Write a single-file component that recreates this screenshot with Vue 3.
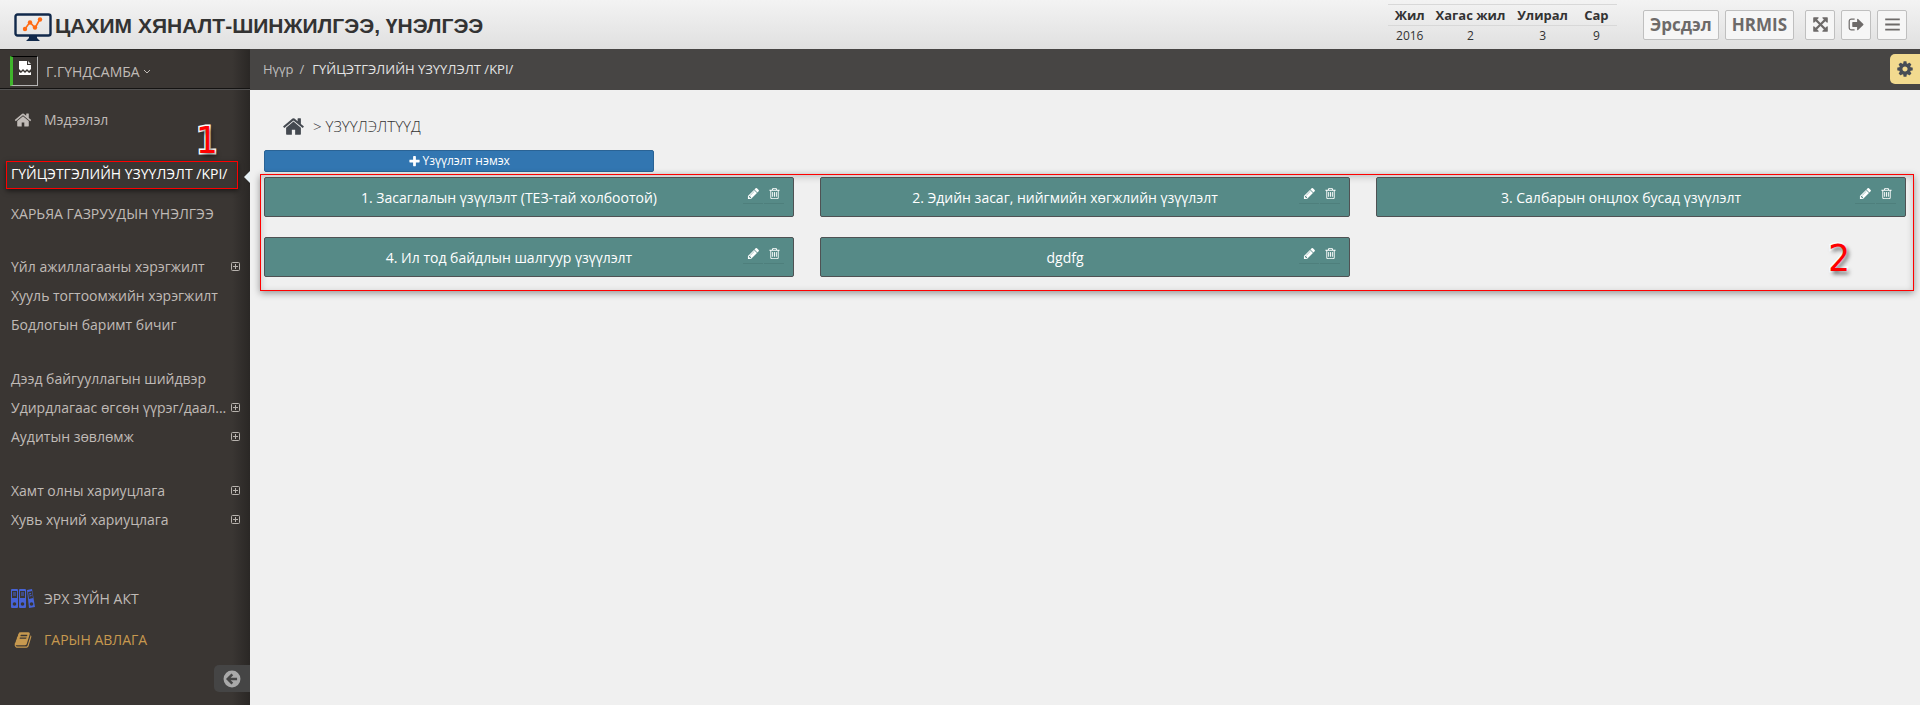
<script setup>
const icons = {
  home: 'M1472 992v480q0 26-19 45t-45 19h-384v-384h-256v384h-384q-26 0-45-19t-19-45v-480q0-1 .5-3t.5-3l575-474 575 474q1 2 1 6zm223-69l-62 74q-8 9-21 11h-3q-13 0-21-7l-692-577-692 577q-12 8-24 7-13-2-21-11l-62-74q-8-10-7-23.5t11-21.5l719-599q32-26 76-26t76 26l244 204v-195q0-14 9-23t23-9h192q14 0 23 9t9 23v408l219 182q10 8 11 21.5t-7 23.5z',
  plus: 'M1600 736v192q0 40-28 68t-68 28h-416v416q0 40-28 68t-68 28h-192q-40 0-68-28t-28-68v-416h-416q-40 0-68-28t-28-68v-192q0-40 28-68t68-28h416v-416q0-40 28-68t68-28h192q40 0 68 28t28 68v416h416q40 0 68 28t28 68z',
  pencil: 'M491 1536l91-91-235-235-91 91v107h128v128h107zm523-928q0-22-22-22-10 0-17 7l-542 542q-7 7-7 17 0 22 22 22 10 0 17-7l542-542q7-7 7-17zm-54-192l416 416-832 832h-416v-416zm683 96q0 53-37 90l-166 166-416-416 166-165q36-38 90-38 53 0 91 38l235 234q37 39 37 91z',
  trash: 'M704 736v576q0 14-9 23t-23 9h-64q-14 0-23-9t-9-23v-576q0-14 9-23t23-9h64q14 0 23 9t9 23zm256 0v576q0 14-9 23t-23 9h-64q-14 0-23-9t-9-23v-576q0-14 9-23t23-9h64q14 0 23 9t9 23zm256 0v576q0 14-9 23t-23 9h-64q-14 0-23-9t-9-23v-576q0-14 9-23t23-9h64q14 0 23 9t9 23zm128 724v-948h-896v948q0 22 7 40.5t14.5 27 10.5 8.5h832q3 0 10.5-8.5t14.5-27 7-40.5zm-672-1076h448l-48-117q-7-9-17-11h-317q-10 2-17 11zm928 32v64q0 14-9 23t-23 9h-96v948q0 83-47 143.5t-113 60.5h-832q-66 0-113-58.5t-47-141.5v-952h-96q-14 0-23-9t-9-23v-64q0-14 9-23t23-9h309l70-167q15-37 54-63t79-26h320q40 0 79 26t54 63l70 167h309q14 0 23 9t9 23z',
  gear: 'M1152 896q0-106-75-181t-181-75-181 75-75 181 75 181 181 75 181-75 75-181zm512-109v222q0 12-8 23t-20 13l-185 28q-19 54-39 91 35 50 107 138 10 12 10 25t-9 23q-27 37-99 108t-94 71q-12 0-26-9l-138-108q-44 23-91 38-16 136-29 186-7 28-36 28h-222q-14 0-24.5-8.5t-11.5-21.5l-28-184q-49-16-90-37l-141 107q-10 9-25 9-14 0-25-11-126-114-165-168-7-10-7-23 0-12 8-23 15-21 51-66.5t54-70.5q-27-50-41-99l-183-27q-13-2-21-12.5t-8-23.5v-222q0-12 8-23t19-13l186-28q14-46 39-92-40-57-107-138-10-12-10-24 0-10 9-23 26-36 98.5-107.5t94.5-71.5q13 0 26 10l138 107q44-23 91-38 16-136 29-186 7-28 36-28h222q14 0 24.5 8.5t11.5 21.5l28 184q49 16 90 37l142-107q9-9 24-9 13 0 25 10 129 119 165 170 7 8 7 22 0 12-8 23-15 21-51 66.5t-54 70.5q26 50 41 98l183 28q13 2 21 12.5t8 23.5z',
  expand: 'M1411 541l-355 355 355 355 144-144q29-31 70-14 39 17 39 59v448q0 26-19 45t-45 19h-448q-42 0-59-40-17-39 14-69l144-144-355-355-355 355 144 144q31 30 14 69-17 40-59 40h-448q-26 0-45-19t-19-45v-448q0-42 40-59 39-17 69 14l144 144 355-355-355-355-144 144q-19 19-45 19-12 0-24-5-40-17-40-59v-448q0-26 19-45t45-19h448q42 0 59 40 17 39-14 69l-144 144 355 355 355-355-144-144q-31-30-14-69 17-40 59-40h448q26 0 45 19t19 45v448q0 42-39 59-13 5-25 5-26 0-45-19z',
  signout: 'M704 1440q0 4 1 20t.5 26.5-3 23.5-10 19.5-20.5 6.5h-320q-119 0-203.5-84.5t-84.5-203.5v-704q0-119 84.5-203.5t203.5-84.5h320q13 0 22.5 9.5t9.5 22.5q0 4 1 20t.5 26.5-3 23.5-10 19.5-20.5 6.5h-320q-66 0-113 47t-47 113v704q0 66 47 113t113 47h312l11.5 1 11.5 3 8 5.5 7 9 2 13.5zm928-544q0 26-19 45l-544 544q-19 19-45 19t-45-19-19-45v-288h-448q-26 0-45-19t-19-45v-384q0-26 19-45t45-19h448v-288q0-26 19-45t45-19 45 19l544 544q19 19 19 45z',
  bars: 'M128 1344h1536v192h-1536zM128 800h1536v192h-1536zM128 256h1536v192h-1536z',
  book: 'M1703 478q40 57 18 129l-275 906q-19 64-76.5 107.5t-122.5 43.5h-923q-77 0-148.5-53.5t-99.5-131.5q-24-67-2-127 0-4 3-27t4-37q1-8-3-21.5t-3-19.5q2-11 8-21t16.5-23.5 16.5-23.5q23-38 45-91.5t30-91.5q3-10 .5-30t-.5-28q3-11 17-28t17-23q21-36 42-92t25-90q1-9-2.5-32t.5-28q4-13 22-30.5t22-22.5q19-26 42.5-84.5t27.5-96.5q1-8-3-25.5t-2-26.5q2-8 9-18t18-23 17-21q8-12 16.5-30.5t15-35 16-36 19.5-32 26.5-23.5 36-11.5 47.5 5.5l-1 3q38-9 51-9h761q74 0 114 56t18 130l-274 906q-36 119-71.5 153.5t-128.5 34.5h-869q-27 0-38 15-11 16-1 43 24 70 144 70h923q29 0 56-15.5t35-41.5l300-987q7-22 5-57 38 15 59 43zm-1064 2q-4 13 2 22.5t20 9.5h608q13 0 25.5-9.5t16.5-22.5l21-64q4-13-2-22.5t-20-9.5h-608q-13 0-25.5 9.5t-16.5 22.5zm-83 256q-4 13 2 22.5t20 9.5h608q13 0 25.5-9.5t16.5-22.5l21-64q4-13-2-22.5t-20-9.5h-608q-13 0-25.5 9.5t-16.5 22.5z',
}

const groups = [
  [
    { text: 'Үйл ажиллагааны хэрэгжилт', more: true },
    { text: 'Хууль тогтоомжийн хэрэгжилт' },
    { text: 'Бодлогын баримт бичиг' },
  ],
  [
    { text: 'Дээд байгууллагын шийдвэр' },
    { text: 'Удирдлагаас өгсөн үүрэг/даал...', more: true },
    { text: 'Аудитын зөвлөмж', more: true },
  ],
  [
    { text: 'Хамт олны хариуцлага', more: true },
    { text: 'Хувь хүний хариуцлага', more: true },
  ],
]

const cards = [
  '1. Засаглалын үзүүлэлт (ТЕЗ-тай холбоотой)',
  '2. Эдийн засаг, нийгмийн хөгжлийн үзүүлэлт',
  '3. Салбарын онцлох бусад үзүүлэлт',
  '4. Ил тод байдлын шалгуур үзүүлэлт',
  'dgdfg',
]

const tools = [
  { icon: 'expand', label: 'Бүтэн дэлгэц' },
  { icon: 'signout', label: 'Гарах' },
  { icon: 'bars', label: 'Цэс' },
]
</script>

<template>
  <div class="page">
    <header class="header">
      <div class="brand">
        <svg class="logo" viewBox="0 0 38 28" aria-hidden="true">
          <rect x="1.5" y="1.5" width="35" height="21" rx="2" fill="none" stroke="#11294b" stroke-width="2.4" />
          <path d="M15 23h8v2l3 3H12l3-3z" fill="#11294b" />
          <path d="M11 16l5-7 5 6 5-9" fill="none" stroke="#ff6a13" stroke-width="1.6" />
          <g fill="#ff6a13">
            <circle cx="11" cy="16" r="2.2" /><circle cx="16" cy="9.5" r="2.2" />
            <circle cx="21" cy="14.5" r="2.2" /><circle cx="26" cy="6.5" r="2.2" />
          </g>
        </svg>
        <span class="title">ЦАХИМ ХЯНАЛТ-ШИНЖИЛГЭЭ, ҮНЭЛГЭЭ</span>
      </div>
      <table class="period">
        <colgroup><col class="c1"><col class="c2"><col class="c3"><col class="c4"></colgroup>
        <thead>
          <tr><th>Жил</th><th>Хагас жил</th><th>Улирал</th><th>Сар</th></tr>
        </thead>
        <tbody>
          <tr><td>2016</td><td>2</td><td>3</td><td>9</td></tr>
        </tbody>
      </table>
      <div class="links">
        <button type="button" class="btn">Эрсдэл</button>
        <button type="button" class="btn">HRMIS</button>
      </div>
      <div class="tools">
        <button v-for="t in tools" :key="t.icon" type="button" class="btn square" :aria-label="t.label">
          <svg class="i16" viewBox="0 0 1792 1792"><path :d="icons[t.icon]" /></svg>
        </button>
      </div>
    </header>

    <div class="body">
      <aside class="sidebar">
        <a href="#" class="user">
          <span class="avatar">
            <svg viewBox="0 0 12 14" width="12" height="14" aria-hidden="true">
              <path d="M0 0h8v4h4v4l-2 2-2-2-2 2-2-2-2 2-2-2z" fill="#fff" />
              <path d="M9 0l3 3H9z" fill="#ddd" />
              <path d="M0 11l2 1 2-2 2 2 2-2 2 2 2-1v3H0z" fill="#fff" />
            </svg>
          </span>
          <span>Г.ГҮНДСАМБА</span>
          <svg class="chevron" viewBox="0 0 8 6" aria-hidden="true"><path d="M1 1l3 3 3-3" /></svg>
        </a>

        <nav class="nav">
          <a href="#" class="row tall home">
            <span class="lead"><svg class="i18" viewBox="0 0 1792 1792"><path :d="icons.home" /></svg></span>
            Мэдээлэл
          </a>
          <ul class="list caps">
            <li class="current">
              <a href="#" class="row active"><span class="outline">ГҮЙЦЭТГЭЛИЙН ҮЗҮҮЛЭЛТ /KPI/</span></a>
              <span class="mark one">1</span>
            </li>
            <li><a href="#" class="row">ХАРЬЯА ГАЗРУУДЫН ҮНЭЛГЭЭ</a></li>
          </ul>
          <ul v-for="(g, n) in groups" :key="n" class="list">
            <li v-for="item in g" :key="item.text">
              <a href="#" class="row">
                {{ item.text }}
                <svg v-if="item.more" class="more" viewBox="0 0 9 9" aria-hidden="true">
                  <rect x=".5" y=".5" width="8" height="8" rx="1" /><path d="M2 4.5h5M4.5 2v5" />
                </svg>
              </a>
            </li>
          </ul>
          <div class="extra">
            <a href="#" class="row tall">
              <span class="lead">
                <svg viewBox="0 0 24 19" width="24" height="19" aria-hidden="true">
                  <g fill="#4763d6">
                    <rect width="7" height="19" rx="1" /><rect x="8" width="7" height="19" rx="1" />
                    <path d="M16 1l5-1 3 18-6 1z" />
                  </g>
                  <g fill="#3a3633">
                    <rect x="1" y="2" width="5" height="7" /><rect x="9" y="2" width="5" height="7" />
                    <path d="M17 3l4-1 1 7-4 1z" />
                    <circle cx="3.5" cy="15" r="1.8" /><circle cx="11.5" cy="15" r="1.8" /><circle cx="20.5" cy="15" r="1.8" />
                  </g>
                  <path d="M2 4h3M2 6h3M10 4h3M10 6h3M18 5l2-.5M18.5 7l2-.5" stroke="#4763d6" />
                </svg>
              </span>
              ЭРХ ЗҮЙН АКТ
            </a>
            <a href="#" class="row tall manual">
              <span class="lead"><svg class="i18" viewBox="0 0 1792 1792"><path :d="icons.book" /></svg></span>
              ГАРЫН АВЛАГА
            </a>
          </div>
        </nav>

        <button type="button" class="minify" aria-label="Цэс хураах">
          <svg viewBox="0 0 16 16" width="18" height="18">
            <circle cx="8" cy="8" r="7.5" fill="#a9a9a9" />
            <path d="M12.5 8H4.500M8.300 3.800L4.200 8l4.100 4.200" fill="none" stroke="#454545" stroke-width="2.2" />
          </svg>
        </button>
      </aside>

      <main class="main">
        <div class="ribbon">
          <a href="#">Нүүр</a><span class="sep">/</span><span class="here">ГҮЙЦЭТГЭЛИЙН ҮЗҮҮЛЭЛТ /KPI/</span>
          <button type="button" class="settings" aria-label="Тохиргоо">
            <svg class="i18" viewBox="0 0 1792 1792"><path :d="icons.gear" /></svg>
          </button>
        </div>

        <div class="content">
          <h1 class="heading">
            <svg class="i24" viewBox="0 0 1792 1792" aria-hidden="true"><path :d="icons.home" /></svg>
            <span>&gt; ҮЗҮҮЛЭЛТҮҮД</span>
          </h1>
          <button type="button" class="add">
            <svg class="i12" viewBox="0 0 1792 1792" aria-hidden="true"><path :d="icons.plus" /></svg>
            Үзүүлэлт нэмэх
          </button>

          <section class="board">
            <article v-for="c in cards" :key="c" class="card">
              <span class="name">{{ c }}</span>
              <span class="actions">
                <button type="button" aria-label="Засах"><svg class="i12" viewBox="0 0 1792 1792"><path :d="icons.pencil" /></svg></button>
                <button type="button" aria-label="Устгах"><svg class="i12" viewBox="0 0 1792 1792"><path :d="icons.trash" /></svg></button>
              </span>
            </article>
            <span class="mark two">2</span>
          </section>
        </div>
      </main>
    </div>
  </div>
</template>

<style>
body { margin: 0; background: #f0f0f0; }
</style>

<style scoped>
* { box-sizing: border-box; }
.page {
  min-height: 100vh;
  display: flex;
  flex-direction: column;
  font: 13px/20px "Open Sans", "Noto Sans", sans-serif;
  color: #333;
}
a { color: inherit; text-decoration: none; }
button { font: inherit; color: inherit; cursor: pointer; padding: 0; margin: 0; }
svg { display: block; flex: none; }
svg.i12, svg.i16, svg.i18, svg.i24 { fill: currentColor; }
.i12 { width: 13px; height: 13px; }
.i16 { width: 17px; height: 17px; }
.i18 { width: 18px; height: 18px; }
.i24 { width: 23px; height: 23px; }

.header {
  height: 49px;
  display: flex;
  align-items: center;
  padding: 0 13px 0 14px;
  background: linear-gradient(#f3f3f3, #e0e0e0);
}
.brand { flex: 1; display: flex; align-items: center; gap: 3px; padding-top: 4px; }
.logo { width: 38px; height: 28px; }
.title { font: bold 21px/24px "Liberation Sans", Arial, sans-serif; white-space: nowrap; padding-bottom: 2px; }
.period {
  width: 229px;
  table-layout: fixed;
  border-collapse: collapse;
  margin-right: 26px;
  text-align: center;
  line-height: 18px;
}
.c1 { width: 19%; }
.c2 { width: 34%; }
.c3 { width: 29%; }
.c4 { width: 18%; }
.period th, .period td { padding: 1px 0; border-top: 1px solid #d8d8d8; white-space: nowrap; }
.period th { font-weight: 700; }
.period td { font-size: 12px; }
.links, .tools { display: flex; gap: 6px; }
.links { margin-right: 11px; }
.btn {
  height: 30px;
  padding: 0 6px;
  border: 1px solid #bfbfbf;
  border-radius: 2px;
  background: #f6f6f6;
  color: #6d6a69;
  font-size: 17px;
  font-weight: 700;
}
.square { width: 30px; display: grid; place-items: center; }

.body { flex: 1; display: grid; grid-template-columns: 250px minmax(0, 1fr); }
.sidebar {
  display: flex;
  flex-direction: column;
  color: #c0bbb7;
  background: linear-gradient(to left, #2a2725, #3a3633 18px);
  font-size: 14px;
}
.user {
  height: 40px;
  display: flex;
  align-items: center;
  padding: 6px 0 0 10px;
  border-top: 1px solid #2e2b29;
  border-bottom: 1px solid #141312;
  box-shadow: 0 1px #525151;
}
.avatar {
  width: 28px;
  height: 30px;
  margin: 0 8px 2px 0;
  display: flex;
  justify-content: center;
  padding-top: 4px;
  border: 1px solid #b5b5b5;
  border-top-color: #000;
  border-left: 3px solid #3fb52c;
}
.chevron { width: 8px; height: 6px; margin-left: 3px; fill: none; stroke: currentColor; }
.nav { padding-top: 10px; }
.row { height: 29px; display: flex; align-items: center; padding: 0 10px 0 11px; white-space: nowrap; }
.tall { height: 41px; }
.home { margin-bottom: 15px; }
.lead { width: 24px; margin-right: 9px; display: flex; justify-content: center; }
.list { list-style: none; margin: 0 0 25px; padding: 0; }
.caps { margin-bottom: 19px; }
.caps .row { height: 39px; }
.current { position: relative; }
.caps .active { color: #fff; padding: 0 0 0 6px; }
.outline { height: 28px; width: 232px; line-height: 24px; padding-left: 4px; border: 1px solid #f00; box-shadow: 0 2px 5px #0008; }
.current::after {
  content: "";
  position: absolute;
  right: 0;
  top: 16px;
  border: 6px solid transparent;
  border-left: 0;
  border-right-color: #e6f0f5;
}
.more { width: 9px; height: 9px; margin-left: auto; fill: none; stroke: #b8b3ae; }
.extra { padding-top: 19px; }
.manual { color: #c7994f; }
.minify {
  align-self: flex-end;
  width: 36px;
  height: 27px;
  margin-top: 5px;
  padding-left: 9px;
  border: 0;
  border-radius: 5px 0 0 5px;
  background: #454545;
}

.ribbon {
  height: 41px;
  display: flex;
  align-items: center;
  padding: 0 0 1px 13px;
  background: #474544;
  color: #bdbdbd;
}
.sep { margin: 0 8px 0 6px; }
.here { color: #e4e4e4; }
.settings {
  width: 30px;
  height: 30px;
  margin-left: auto;
  padding-left: 6px;
  border: 0;
  border-radius: 5px 0 0 5px;
  background: #f2da8f;
  color: #474c55;
}
.content { padding: 22px 6px 0 10px; }
.heading {
  display: flex;
  align-items: center;
  gap: 8px;
  margin: 0 0 10px;
  padding-left: 22px;
  font-size: 15px;
  line-height: 28px;
  font-weight: 300;
}
.heading svg { color: #444950; }
.add {
  width: 23.6%;
  height: 22px;
  margin-left: 4px;
  display: flex;
  align-items: center;
  justify-content: center;
  gap: 1px;
  border: 1px solid #2a6395;
  border-radius: 2px;
  background: #3276b1;
  color: #fff;
  font-size: 12px;
}
.board {
  position: relative;
  display: grid;
  grid-template-columns: repeat(3, minmax(0, 1fr));
  gap: 20px 26px;
  margin-top: 2px;
  padding: 2px 7px 13px 3px;
  border: 1px solid #f00;
  box-shadow: 0 2px 7px #0006, inset 0 2px 7px #0003;
}
.card {
  height: 40px;
  display: flex;
  border: 1px solid #4f5254;
  border-radius: 2px;
  background: #568a87;
  color: #fff;
  font-size: 14px;
}
.name { flex: 1; text-align: center; line-height: 39px; }
.actions { display: flex; gap: 1px; width: 60px; padding: 6px 0 0 10px; margin-left: -20px; }
.actions button {
  width: 20px;
  height: 20px;
  display: grid;
  place-items: center;
  border: 0;
  border-bottom: 1px solid #4e7f7c;
  background: none;
}
.mark {
  position: absolute;
  font: 38px/38px "DejaVu Sans Condensed", "DejaVu Sans", sans-serif;
  color: #f00;
  -webkit-text-stroke: 3px #fff;
  paint-order: stroke fill;
  text-shadow: 2px 3px 4px #0009;
}
.one { left: 196px; top: -34px; }
.two { right: 63px; bottom: 13px; }
</style>
